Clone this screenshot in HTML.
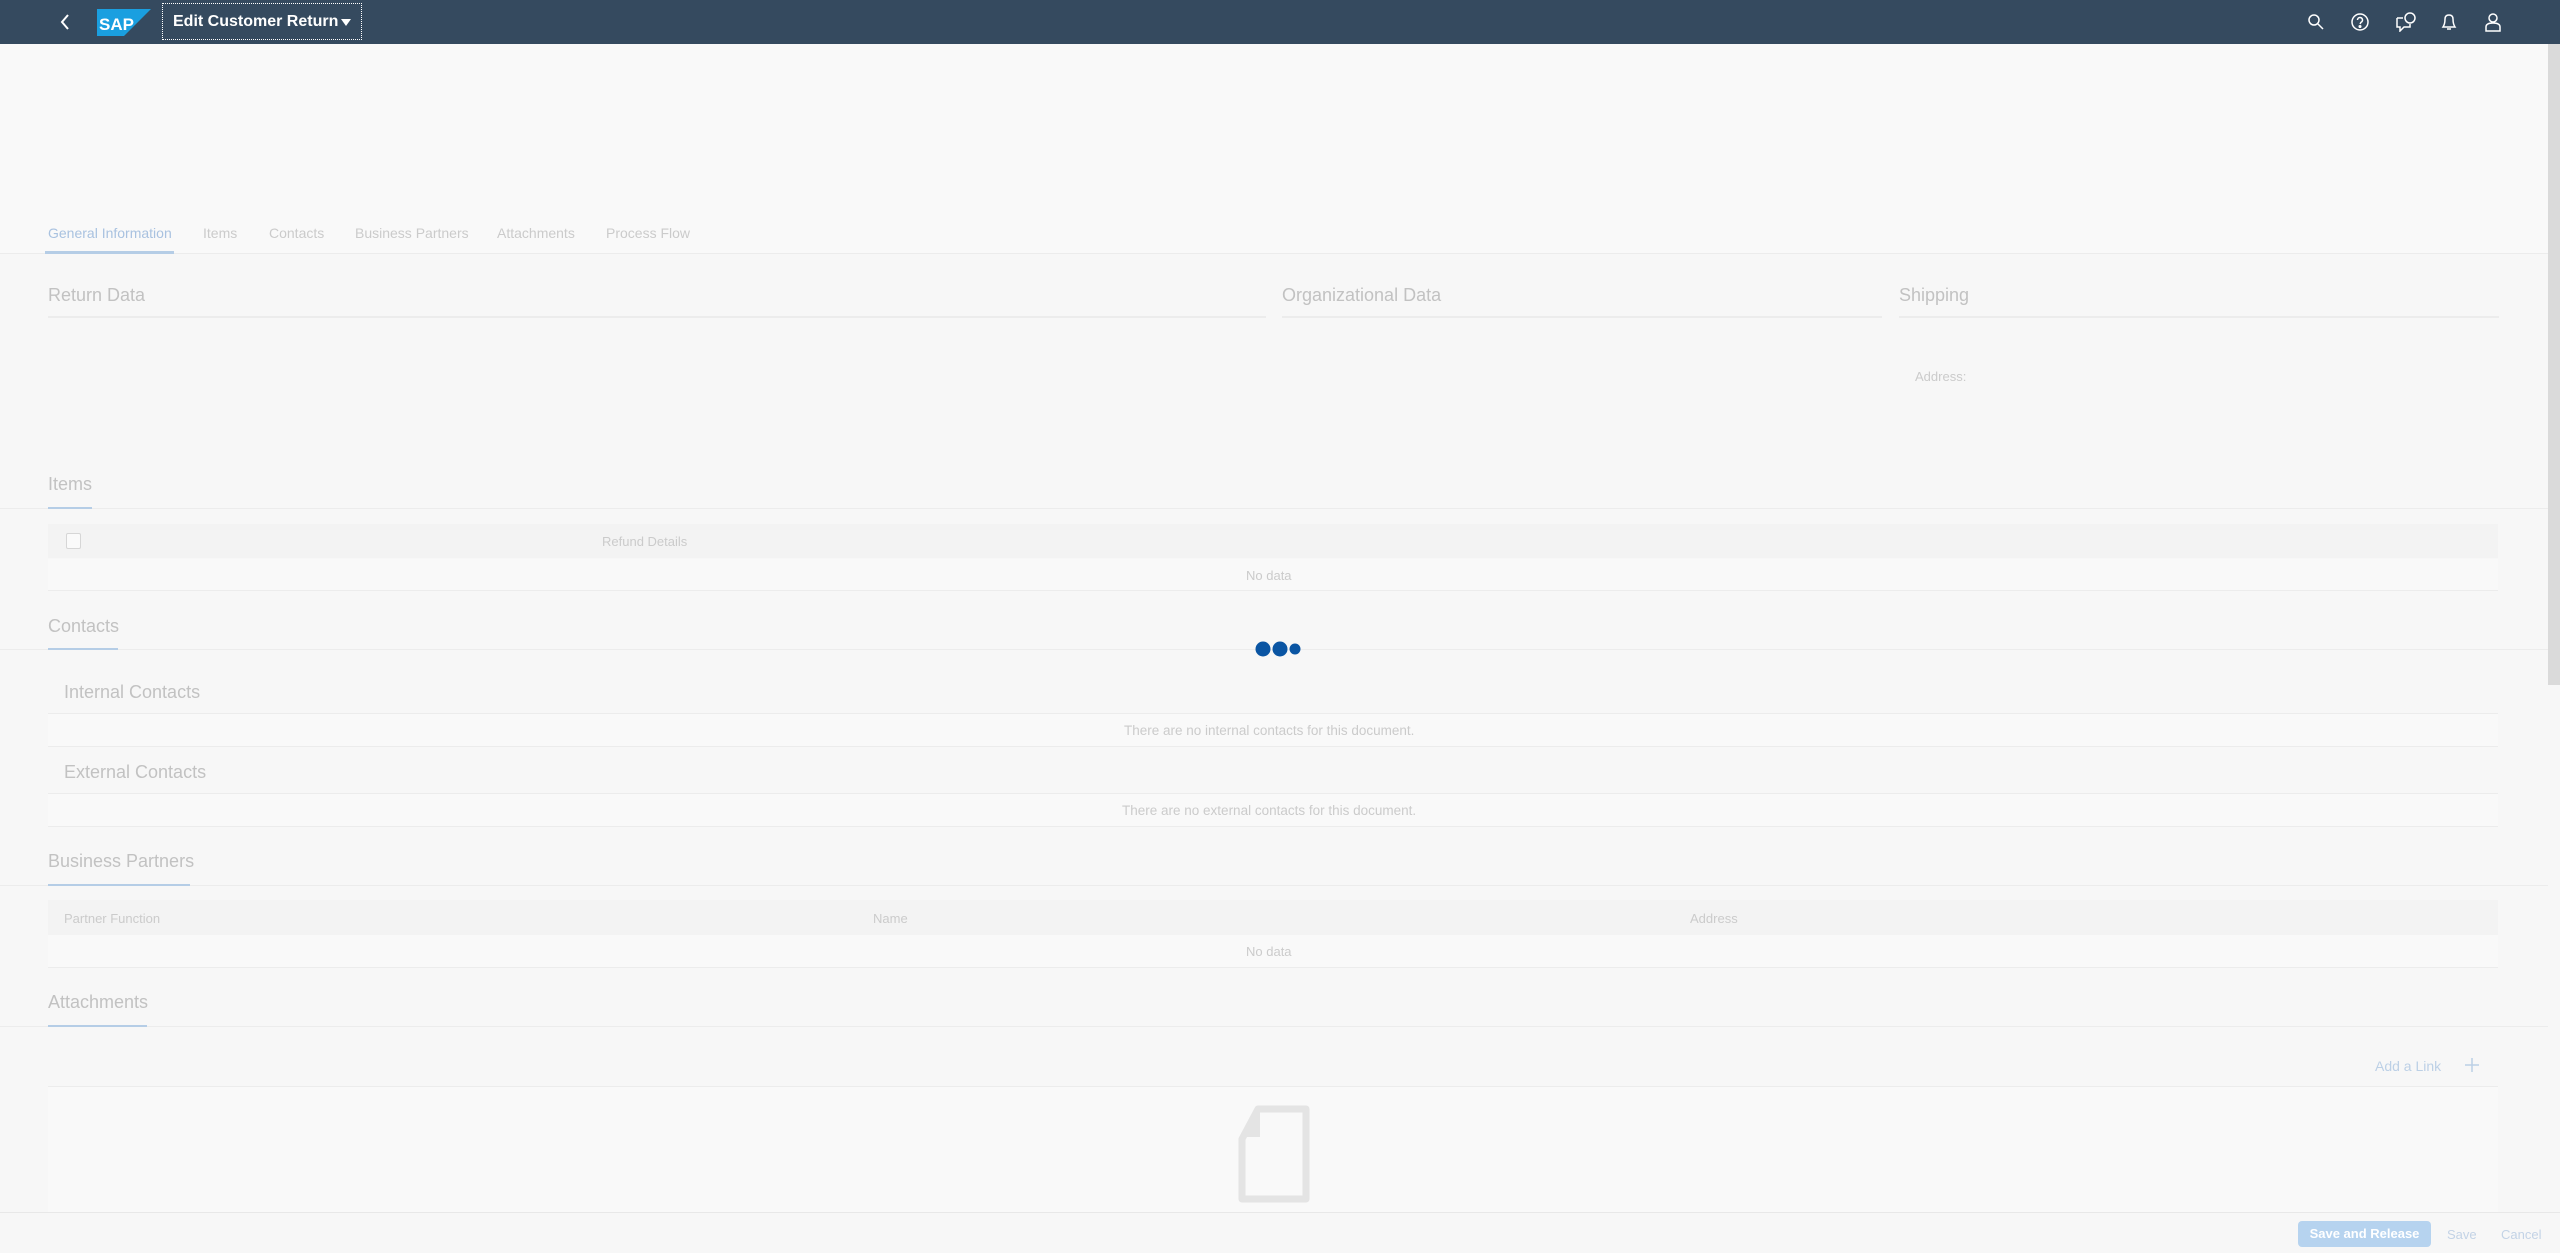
<!DOCTYPE html>
<html><head><meta charset="utf-8"><style>
*{box-sizing:border-box;margin:0;padding:0}
body{width:2560px;height:1253px;overflow:hidden;background:#f7f7f7;font-family:"Liberation Sans",sans-serif;position:relative;color:#c4c4c4}
.a{position:absolute;white-space:nowrap}
.hl{position:absolute;height:2px;background:#ececec}
.h2{font-size:18px;color:#c2c2c2;margin-top:3px}
.sm{font-size:14px;color:#cbcbcb}
.ul{position:absolute;height:2px;background:#b5cde6}
</style></head><body>
<div class="a" style="left:0;top:0;width:2560px;height:44px;background:#354a5f"></div>
<svg class="a" style="left:58px;top:12px" width="14" height="20"><path d="M10 3 L4 10 L10 17" stroke="#fff" stroke-width="2" fill="none"/></svg>
<svg class="a" style="left:97px;top:9px" width="54" height="27"><polygon points="0,0 54,0 27,27 0,27" fill="#1a9fe0"/><text x="2" y="21" font-family="Liberation Sans" font-weight="bold" font-size="17" fill="#fff">SAP</text></svg>
<div class="a" style="left:162px;top:3px;width:200px;height:37px;border:1px dotted #fff"></div>
<div class="a" style="left:173px;top:13px;font-size:16px;font-weight:bold;color:#fff">Edit Customer Return</div>
<svg class="a" style="left:341px;top:18px" width="10" height="9"><polygon points="0,1 10,1 5,8" fill="#fff"/></svg>
<svg class="a" style="left:2306px;top:12px" width="20" height="20" fill="none" stroke="#fff" stroke-width="1.5"><circle cx="8" cy="8" r="5"/><path d="M12 12 L17 17"/></svg>
<svg class="a" style="left:2350px;top:12px" width="20" height="20" fill="none" stroke="#fff" stroke-width="1.5"><circle cx="10" cy="10" r="8"/><path d="M7.5 8 a2.5 2.5 0 1 1 3.5 2.3 L10 12"/><circle cx="10" cy="14.5" r=".8" fill="#fff"/></svg>
<svg class="a" style="left:2395px;top:12px" width="22" height="20" fill="none" stroke="#fff" stroke-width="1.5"><path d="M2 6 H8 M2 6 V15 H5 V19 L9 15 H15 V12"/><circle cx="15" cy="6" r="5"/></svg>
<svg class="a" style="left:2439px;top:12px" width="20" height="20" fill="none" stroke="#fff" stroke-width="1.5"><path d="M4 15 Q6 12 6 7 Q6 3 10 3 Q14 3 14 7 Q14 12 16 15 Z M8 17 H12"/></svg>
<svg class="a" style="left:2483px;top:12px" width="20" height="20" fill="none" stroke="#fff" stroke-width="1.5"><circle cx="10" cy="6" r="4"/><path d="M3 19 V15 Q3 11 10 11 Q17 11 17 15 V19 Z"/></svg>

<div class="a" style="left:0;top:44px;width:2548px;height:209px;background:#f9f9f9"></div>
<div class="a" style="left:2548px;top:44px;width:12px;height:641px;background:#dadada"></div>
<div class="a sm" style="left:48px;top:225px;color:#a9c2e0">General Information</div>
<div class="a sm" style="left:203px;top:225px">Items</div>
<div class="a sm" style="left:269px;top:225px">Contacts</div>
<div class="a sm" style="left:355px;top:225px">Business Partners</div>
<div class="a sm" style="left:497px;top:225px">Attachments</div>
<div class="a sm" style="left:606px;top:225px">Process Flow</div>
<div class="hl" style="left:0;top:253px;width:2548px;height:1px"></div>
<div class="ul" style="left:45px;top:251px;width:129px;height:3px"></div>

<div class="a h2" style="left:48px;top:282px">Return Data</div>
<div class="a h2" style="left:1282px;top:282px">Organizational Data</div>
<div class="a h2" style="left:1899px;top:282px">Shipping</div>
<div class="hl" style="left:48px;top:316px;width:1218px"></div>
<div class="hl" style="left:1282px;top:316px;width:600px"></div>
<div class="hl" style="left:1899px;top:316px;width:600px"></div>
<div class="a sm" style="left:1915px;top:369px;font-size:13px">Address:</div>

<div class="a h2" style="left:48px;top:471px">Items</div>
<div class="hl" style="left:0;top:508px;width:2548px;height:1px"></div>
<div class="ul" style="left:48px;top:507px;width:44px"></div>
<div class="a" style="left:48px;top:524px;width:2450px;height:34px;background:#f3f3f3"></div>
<div class="a" style="left:66px;top:533px;width:15px;height:16px;border:1px solid #d6d6d6;border-radius:2px;background:#fafafa"></div>
<div class="a sm" style="left:602px;top:534px;font-size:13px">Refund Details</div>
<div class="a" style="left:48px;top:559px;width:2450px;height:32px;background:#f9f9f9;border-bottom:1px solid #ececec"></div>
<div class="a sm" style="left:1246px;top:568px;font-size:13px">No data</div>

<div class="a h2" style="left:48px;top:613px">Contacts</div>
<div class="hl" style="left:0;top:649px;width:2548px;height:1px"></div>
<div class="ul" style="left:48px;top:648px;width:70px"></div>
<svg class="a" style="left:1253px;top:640px" width="50" height="18"><circle cx="10" cy="9" r="7.5" fill="#0a55a3"/><circle cx="27" cy="9" r="7.5" fill="#0a55a3"/><circle cx="42" cy="9" r="5.5" fill="#0a55a3"/></svg>
<div class="a h2" style="left:64px;top:679px;font-size:18px">Internal Contacts</div>
<div class="a" style="left:48px;top:713px;width:2450px;height:34px;background:#f9f9f9;border-top:1px solid #ececec;border-bottom:1px solid #ececec"></div>
<div class="a sm" style="left:1124px;top:723px;font-size:13.5px">There are no internal contacts for this document.</div>
<div class="a h2" style="left:64px;top:759px;font-size:18px">External Contacts</div>
<div class="a" style="left:48px;top:793px;width:2450px;height:34px;background:#f9f9f9;border-top:1px solid #ececec;border-bottom:1px solid #ececec"></div>
<div class="a sm" style="left:1122px;top:803px;font-size:13.5px">There are no external contacts for this document.</div>

<div class="a h2" style="left:48px;top:848px">Business Partners</div>
<div class="hl" style="left:0;top:885px;width:2548px;height:1px"></div>
<div class="ul" style="left:48px;top:884px;width:142px"></div>
<div class="a" style="left:48px;top:900px;width:2450px;height:35px;background:#f3f3f3"></div>
<div class="a sm" style="left:64px;top:911px;font-size:13px">Partner Function</div>
<div class="a sm" style="left:873px;top:911px;font-size:13px">Name</div>
<div class="a sm" style="left:1690px;top:911px;font-size:13px">Address</div>
<div class="a" style="left:48px;top:935px;width:2450px;height:33px;background:#f9f9f9;border-bottom:1px solid #ececec"></div>
<div class="a sm" style="left:1246px;top:944px;font-size:13px">No data</div>

<div class="a h2" style="left:48px;top:989px">Attachments</div>
<div class="hl" style="left:0;top:1026px;width:2548px;height:1px"></div>
<div class="ul" style="left:48px;top:1025px;width:99px"></div>
<div class="a sm" style="left:2375px;top:1058px;color:#bcd0e6">Add a Link</div>
<svg class="a" style="left:2464px;top:1057px" width="16" height="16"><path d="M8 1 V15 M1 8 H15" stroke="#bcd0e6" stroke-width="1.5"/></svg>
<div class="a" style="left:48px;top:1086px;width:2450px;height:127px;background:#f9f9f9;border-top:1px solid #ececec"></div>
<svg class="a" style="left:1236px;top:1105px" width="76" height="100"><path d="M22 4 H70 V94 H6 V34 Z" fill="none" stroke="#e4e4e4" stroke-width="7" stroke-linejoin="round"/><path d="M22 4 V30 H6" fill="#e4e4e4" stroke="#e4e4e4" stroke-width="4"/></svg>

<div class="a" style="left:0;top:1212px;width:2560px;height:41px;background:#f7f7f7;border-top:1px solid #e8e8e8"></div>
<div class="a" style="left:2298px;top:1221px;width:133px;height:26px;background:#b6d3ef;border-radius:4px;color:#fff;font-weight:bold;font-size:13px;text-align:center;line-height:26px">Save and Release</div>
<div class="a sm" style="left:2447px;top:1227px;font-size:13px;color:#c3d3e6">Save</div>
<div class="a sm" style="left:2501px;top:1227px;font-size:13px;color:#c3d3e6">Cancel</div>
</body></html>
